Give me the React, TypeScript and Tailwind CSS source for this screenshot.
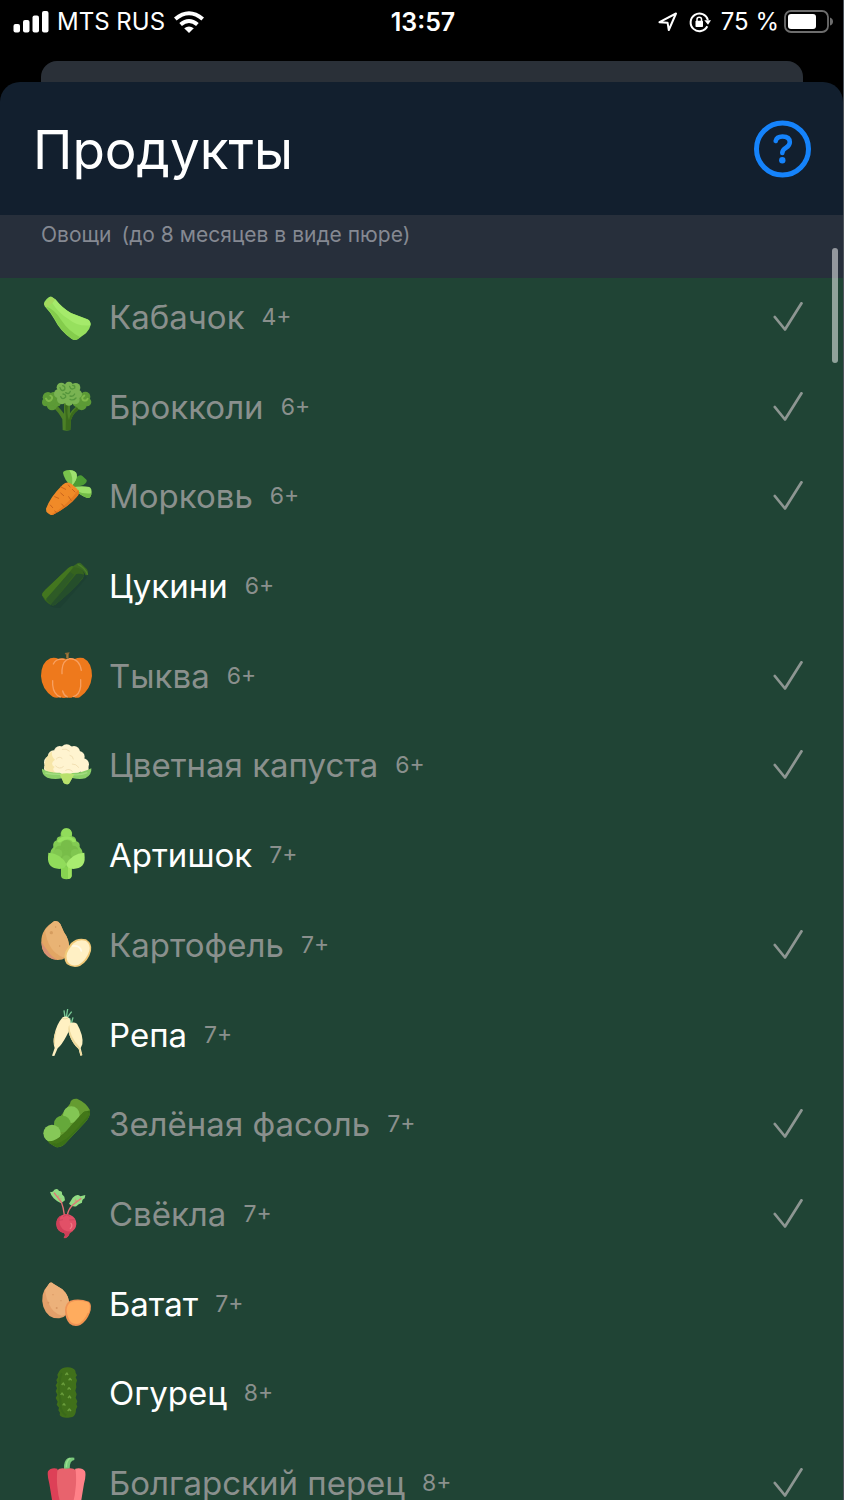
import { useState, type ReactNode } from "react";

type Product = { name: string; age: string; tried: boolean; icon: ReactNode };

function Glyph({ viewBox, children }: { viewBox: string; children: ReactNode }) {
  return (
    <svg viewBox={viewBox} className="size-[52px] shrink-0 overflow-visible" aria-hidden="true">
      {children}
    </svg>
  );
}

const squash = (
  <Glyph viewBox="60 34 156 156">
    <path d="M72 73 Q72 66 80 58 Q90 47 96 52 L106 59 Q126 85 153 100 L203 119 Q213 125 212 136 Q209 150 198 161 L173 179 Q164 184 154 177 Q121 155 103 119 Q92 99 74 80 Z" fill="#97e05e" />
    <path d="M77 80 Q94 99 106 121 Q124 155 156 178 Q164 183 172 179 L181 173 Q145 153 125 123 Q103 88 77 80Z" fill="#84cc4c" />
    <path d="M106 59 Q128 87 154 101 L204 120 Q213 126 211 137 Q174 142 145 118 Q116 100 96 69Z" fill="#a5ea6b" />
    <path d="M72 73 L94 51 L105 59 Q96 76 78 82Z" fill="#a4d95e" />
  </Glyph>
);

const broccoli = (
  <Glyph viewBox="60 303 156 156">
    <path d="M100 383 Q116 396 127 418 L128 450 Q140 454 151 450 L153 420 Q160 397 182 385 L170 378 Q156 390 150 400 V370 H132 V401 Q123 389 112 377Z" fill="#4c8026" />
    <path d="M134 376 Q140 412 137 450 H151 L153 420 Q160 397 182 385 L175 379 Q149 398 147 421 Q139 401 144 376Z" fill="#3b6b1c" />
    <g fill="#5c9a36">
      <circle cx="84" cy="352" r="16" /><circle cx="78" cy="367" r="12" /><circle cx="96" cy="375" r="16" /><circle cx="110" cy="366" r="14" /><circle cx="101" cy="349" r="13" /><circle cx="92" cy="362" r="16" />
      <circle cx="196" cy="350" r="15" /><circle cx="201" cy="366" r="13" /><circle cx="185" cy="376" r="15" /><circle cx="171" cy="368" r="13" /><circle cx="182" cy="352" r="14" /><circle cx="189" cy="363" r="15" />
    </g>
    <g fill="none" stroke="#7fb94a" strokeWidth="6" strokeLinecap="round">
      <path d="M78 356 Q84 368 94 359 Q100 350 91 347" /><path d="M203 356 Q200 365 189 360 Q183 352 193 347" />
    </g>
    <g fill="#79b352">
      <circle cx="124" cy="322" r="14" /><circle cx="147" cy="318" r="13" /><circle cx="167" cy="323" r="14" /><circle cx="173" cy="342" r="13" /><circle cx="165" cy="359" r="14" /><circle cx="147" cy="364" r="13" /><circle cx="126" cy="358" r="15" /><circle cx="115" cy="341" r="13" /><circle cx="145" cy="340" r="26" />
    </g>
    <g fill="none" stroke="#55963c" strokeWidth="4" strokeLinecap="round">
      <path d="M120 323 Q124 336 134 329 Q137 319 128 317" /><path d="M149 319 Q153 332 164 324 Q166 316 158 316" /><path d="M122 350 Q128 361 137 351 Q138 343 129 342" /><path d="M150 348 Q160 351 164 342 M150 358 Q160 363 168 354" /><path d="M137 338 Q147 345 151 334" />
    </g>
  </Glyph>
);

const carrot = (
  <Glyph viewBox="60 32 156 156">
    <path d="M152 79 Q158 62 174 50 Q183 45 188 51 L200 62 Q202 70 190 77 Q180 81 160 84Z" fill="#4c9c34" />
    <path d="M153 80 Q133 62 129 41 Q129 33 148 32 Q165 32 170 44 Q174 59 155 80Z" fill="#79c24c" />
    <path d="M148 33 Q165 32 170 44 Q174 59 155 80 Q161 54 148 33Z" fill="#9fe070" />
    <path d="M157 84 Q184 78 208 83 Q217 87 214 105 Q211 118 202 116 Q180 110 157 84Z" fill="#9bdf68" />
    <path d="M168 94 Q190 105 214 102 Q213 118 203 116 Q185 111 168 94Z" fill="#74bd48" />
    <path d="M78 148 Q91 112 128 76 Q142 64 155 74 L171 88 Q181 98 171 111 Q150 139 98 167 Q91 169 79 157Z" fill="#f08a28" />
    <path d="M94 165 Q141 139 175 91 Q181 101 171 112 Q145 143 98 167Z" fill="#e57b20" />
    <path d="M123 83 L137 90 M131 109 L122 101 M104 112 L116 117 M146 112 L154 124 M157 90 L165 98 M125 134 L133 143 M91 137 L98 145 M104 155 L110 160 M145 77 L150 83" stroke="#c9641c" strokeWidth="3" strokeLinecap="round" />
  </Glyph>
);

const zucchini = (
  <Glyph viewBox="60 301 156 156">
    <path d="M91 439 Q105 447 121 444 L200 354 L190 335Z" fill="#1d4032" />
    <path d="M66 407 Q66 399 76 390 L145 325 Q161 313 180 325 Q199 338 188 357 Q158 392 106 435 Q96 441 84 431 Q71 421 66 407Z" fill="#35631f" />
    <path d="M66 407 Q66 399 76 390 L145 325 Q153 318 164 318 L78 422Z" fill="#43761f" />
    <path d="M78 418 L150 337 L162 345 L93 436Z" fill="#2e5b26" />
    <path d="M92 435 L169 343 Q179 340 193 346 Q172 383 106 435 Q99 439 92 435Z" fill="#254e2b" />
    <path d="M155 323 L169 313 Q178 306 185 313 L201 329 Q207 338 203 346 L197 347 Q190 331 176 326 Q166 321 155 323Z" fill="#3a6923" />
    <path d="M173 314 Q194 323 203 345" fill="none" stroke="#4a7f2a" strokeWidth="4" />
  </Glyph>
);

const pumpkin = (
  <Glyph viewBox="60 30 156 156">
    <path d="M91 55 Q104 51 116 57 Q127 52 139 57 Q152 51 164 57 Q176 51 190 54 Q216 67 216 108 Q212 150 179 172 Q169 176 160 170 Q151 176 142 172 Q130 177 121 171 Q109 176 98 170 Q65 148 63 108 Q64 67 91 55Z" fill="#ee791c" />
    <g fill="none" stroke="#f7a061" strokeWidth="4" strokeLinecap="round">
      <path d="M126 101 V90 Q128 61 149 56 Q178 56 184 91" /><path d="M132 58 Q108 55 100 72" /><path d="M98 122 V135 Q101 164 121 171" /><path d="M182 119 V139 Q179 164 160 170" /><path d="M128 153 Q131 166 142 171" />
    </g>
    <path d="M138 55 V45 L134 39 L149 37 L146 44 V56Z" fill="#8e6a34" />
    <path d="M143 42 V56" stroke="#aa8a4a" strokeWidth="2" />
  </Glyph>
);

const cauliflower = (
  <Glyph viewBox="60 299 156 156">
    <g fill="#fff4d0">
      <circle cx="140" cy="334" r="19" /><circle cx="119" cy="337" r="17" /><circle cx="162" cy="338" r="18" /><circle cx="101" cy="350" r="17" /><circle cx="177" cy="352" r="17" /><circle cx="91" cy="369" r="19" /><circle cx="189" cy="375" r="18" /><circle cx="87" cy="387" r="15" /><circle cx="192" cy="388" r="14" />
      <ellipse cx="140" cy="370" rx="55" ry="41" />
    </g>
    <path d="M96 336 Q74 352 73 382 Q74 400 109 402 Q93 390 104 383 Q88 373 105 361 Q93 352 96 336Z" fill="#f7e6a8" />
    <path d="M109 359 Q117 349 126 357 M127 330 Q139 326 148 335 M150 348 Q159 349 160 359 M107 380 Q118 392 130 382 M157 374 Q168 373 176 384 M137 393 Q147 386 157 396" fill="none" stroke="#f2e0b3" strokeWidth="3" strokeLinecap="round" />
    <path d="M66 388 Q90 402 119 400 L139 411 L157 401 Q187 401 214 387 Q216 407 196 417 Q178 421 157 416 L147 433 Q139 437 131 431 L126 417 Q102 422 82 415 Q64 405 66 388Z" fill="#8bcf68" />
    <path d="M76 401 Q99 406 120 405 M160 406 Q181 408 202 400" fill="none" stroke="#a3dd80" strokeWidth="4" />
    <path d="M119 405 Q140 398 163 405 L147 433 Q139 437 131 431Z" fill="#b9e16c" />
  </Glyph>
);

const artichoke = (
  <Glyph viewBox="60 43 156 156">
    <path d="M123 152 H155 V184 Q153 194 139 194 Q125 194 123 184Z" fill="#87d451" />
    <path d="M144 152 H155 V184 Q153 193 144 193Z" fill="#9de35f" />
    <path d="M122 65 Q120 42 139 41 Q159 42 156 65 Q168 66 169 80 Q181 84 179 97 Q193 111 186 137 L139 157 L92 137 Q86 111 100 98 Q97 82 110 77 Q109 67 122 65Z" fill="#83cb53" />
    <g fill="#78bd49">
      <circle cx="140" cy="94" r="18" /><circle cx="119" cy="108" r="15" /><circle cx="160" cy="108" r="15" /><circle cx="140" cy="126" r="18" />
    </g>
    <g fill="#80c650">
      <circle cx="113" cy="117" r="14" /><circle cx="166" cy="117" r="14" /><circle cx="139" cy="136" r="14" />
    </g>
    <path d="M124 61 Q124 42 139 41 Q155 42 156 61 Q148 68 139 67 Q130 68 124 61Z" fill="#91dc5b" />
    <path d="M111 79 Q124 62 139 66 Q156 63 169 80 Q158 87 155 78 Q140 70 124 81 Q117 87 111 79Z" fill="#97e360" />
    <path d="M85 114 Q123 117 139 148 Q138 161 118 163 Q82 161 84 128Z" fill="#91dc5b" />
    <path d="M193 114 Q155 117 139 148 Q140 161 160 163 Q196 161 194 128Z" fill="#a8ec70" />
  </Glyph>
);

const potato = (
  <Glyph viewBox="60 312 156 156">
    <path d="M102 319 Q114 316 121 327 L132 352 Q149 374 148 405 Q141 436 112 435 Q79 432 67 401 Q56 358 86 331Z" fill="#e2a664" />
    <path d="M102 319 Q114 316 121 327 L132 352 Q149 374 148 405 Q143 424 129 427 Q84 410 75 346 Q88 329 102 319Z" fill="#e9b374" />
    <path d="M67 401 Q74 428 112 435 Q92 423 83 407 Q71 394 64 379Z" fill="#d89172" />
    <circle cx="94" cy="353" r="5" fill="#d69d5f" /><circle cx="119" cy="393" r="2" fill="#cf9558" /><circle cx="107" cy="336" r="2" fill="#cf9558" />
    <path d="M153 384 Q172 366 198 373 Q218 386 213 408 Q205 438 180 453 Q159 461 140 447 Q128 432 137 408Z" fill="#f1c978" />
    <path d="M159 386 Q177 371 198 378 Q213 389 208 408 Q198 437 176 449 Q154 456 143 440 Q135 421 146 404Z" fill="#fff0c4" />
    <path d="M158 393 Q180 391 184 408" fill="none" stroke="#fff9e5" strokeWidth="5" strokeLinecap="round" />
  </Glyph>
);

const turnip = (
  <Glyph viewBox="60 40 156 156">
    <path d="M135 65 L132 44 M139 64 L143 40 M142 65 L155 48 M151 84 L149 67 M154 84 L159 65 M151 83 L145 73" fill="none" stroke="#78c995" strokeWidth="4" />
    <path d="M128 65 Q142 58 151 73 Q155 94 139 122 Q124 150 113 158 L103 181 L96 180 L104 157 Q98 142 103 119 Q109 86 128 65Z" fill="#fff1c2" />
    <path d="M147 84 Q160 77 171 84 Q191 119 187 146 L182 157 L187 178 L181 180 L176 160 Q157 143 148 117 Q142 98 147 84Z" fill="#fff1c2" />
    <path d="M111 100 Q103 124 105 151 Q98 139 103 119 Q107 107 111 100Z M148 88 Q148 123 178 153 L187 179 L182 180 L176 160 Q157 143 148 117 Q142 98 148 88Z" fill="#eed99c" />
    <path d="M127 68 Q135 72 144 67" fill="none" stroke="#e4db9b" strokeWidth="3" />
  </Glyph>
);

const beans = (
  <Glyph viewBox="60 310 156 156">
    <path d="M150 327 Q152 311 171 312 Q199 324 210 347 Q212 365 197 381 L142 440 Q125 461 108 457 Q87 448 74 427Z" fill="#659c31" />
    <path d="M210 347 Q212 365 197 381 L142 440 Q125 461 108 457 Q90 449 82 439 Q113 438 145 404 L190 353Z" fill="#3b7117" />
    <path d="M105 442 Q136 434 160 404 L205 354" fill="none" stroke="#437819" strokeWidth="12" />
    <circle cx="154" cy="360" r="25" fill="#83c654" /><circle cx="127" cy="388" r="25" fill="#65a83a" /><circle cx="96" cy="416" r="26" fill="#86c858" />
    <path d="M84 439 Q104 443 133 415 L181 362 L194 350 L203 350 L150 411 Q120 448 90 448Z" fill="#437819" />
  </Glyph>
);

const beet = (
  <Glyph viewBox="60 38 156 156">
    <path d="M90 49 Q98 53 103 43 Q114 38 117 47 Q128 46 126 57 L133 64 L135 75 L123 84 Q111 79 101 69 Q93 61 90 49Z" fill="#92dc84" />
    <path d="M147 85 L158 67 Q171 54 181 63 L196 59 L194 69 Q186 72 186 82 Q175 86 169 93 Q157 96 147 85Z" fill="#92dc84" />
    <path d="M102 52 L124 80 Q131 98 133 119 M184 69 L159 88 Q145 101 142 119" fill="none" stroke="#e47075" strokeWidth="4" />
    <path d="M116 59 V70 M125 70 L114 72 M167 70 L165 83 M178 76 H165" fill="none" stroke="#d79373" strokeWidth="2" />
    <path d="M127 119 Q139 113 151 119 Q170 128 169 147 Q168 165 149 173 Q147 185 135 189 L131 186 Q137 181 133 174 Q110 168 109 146 Q109 127 127 119Z" fill="#e25067" />
    <path d="M125 120 Q108 127 109 148 Q110 168 133 174 Q138 183 131 187 L135 189 Q147 183 149 173 L159 168 Q132 172 122 153 Q113 134 125 120Z" fill="#cf3f58" />
    <path d="M129 124 L140 118 L151 124 M117 135 L129 133 M148 134 L164 133" fill="none" stroke="#c23f57" strokeWidth="2" />
    <path d="M153 144 Q159 151 151 160" fill="none" stroke="#f07a86" strokeWidth="4" strokeLinecap="round" />
  </Glyph>
);

const sweetPotato = (
  <Glyph viewBox="60 308 156 156">
    <path d="M85 328 Q91 316 100 325 L127 342 Q151 363 147 395 Q144 426 118 429 Q83 431 70 394 Q59 355 85 328Z" fill="#e3a06a" />
    <path d="M85 328 Q91 316 100 325 L127 342 Q151 363 147 395 Q144 419 125 421 Q98 413 87 386 Q79 371 75 344Z" fill="#ecb17a" />
    <circle cx="99" cy="358" r="2" fill="#d79661" /><circle cx="123" cy="376" r="2" fill="#d79661" /><circle cx="110" cy="398" r="3" fill="#d79661" /><circle cx="85" cy="382" r="3" fill="#d79661" />
    <path d="M151 376 Q176 367 207 379 Q218 389 209 414 Q199 439 181 449 Q163 456 149 445 Q135 431 135 403 Q137 382 151 376Z" fill="#ef9355" />
    <path d="M154 380 Q175 372 204 381 Q214 391 206 412 Q195 434 180 444 Q165 449 153 441 Q140 423 140 403 Q141 386 154 380Z" fill="#ffac5e" />
    <path d="M182 443 Q196 434 205 413" fill="none" stroke="#f5964a" strokeWidth="4" />
  </Glyph>
);

const cucumber = (
  <Glyph viewBox="60 36 156 156">
    <path d="M118 48 Q124 38 143 37 Q161 38 166 47 L167 54 L171 61 L167 67 L171 76 L168 86 L169 97 L166 107 L170 118 L167 128 L172 139 L169 147 L172 155 L168 163 Q168 182 157 186 L145 188 Q126 190 119 180 L120 173 L115 166 L117 158 L110 149 L113 140 L107 129 L112 119 L107 109 L111 100 L107 91 L112 83 L109 75 L114 67 L112 59Z" fill="#40701a" />
    <path d="M125 54 Q116 78 117 113 Q123 134 122 158 Q127 176 139 181" fill="none" stroke="#3a6a1a" strokeWidth="6" />
    <path d="M136 60 L141 54 L144 60 M146 76 L150 70 L155 76 M125 90 L130 84 L134 91 M143 104 L147 98 L152 104 M122 120 L126 114 L131 121 M144 129 L149 123 L153 130 M128 151 L132 146 L136 152 M143 168 L148 162 L153 168" fill="none" stroke="#6a9d3c" strokeWidth="4" strokeLinejoin="round" />
  </Glyph>
);

const pepper = (
  <Glyph viewBox="60 305 156 156">
    <path d="M132 341 Q130 317 144 308 Q155 305 163 307 V314 Q149 315 149 340Z" fill="#79c87b" />
    <path d="M139 336 Q138 317 151 308" fill="none" stroke="#9ae08f" strokeWidth="4" />
    <path d="M112 340 Q92 336 84 348 Q81 359 88 385 L97 440 Q106 459 123 459 L139 451Z" fill="#dd4057" />
    <path d="M166 340 Q187 336 195 348 Q199 359 192 385 L183 440 Q174 459 157 459 L139 451Z" fill="#ff8188" />
    <path d="M112 345 Q119 336 139 340 Q160 336 167 345 Q172 395 158 448 Q140 466 122 448 Q107 395 112 345Z" fill="#e8636d" />
  </Glyph>
);

const initialProducts: Product[] = [
  { name: "Кабачок", age: "4+", tried: true, icon: squash },
  { name: "Брокколи", age: "6+", tried: true, icon: broccoli },
  { name: "Морковь", age: "6+", tried: true, icon: carrot },
  { name: "Цукини", age: "6+", tried: false, icon: zucchini },
  { name: "Тыква", age: "6+", tried: true, icon: pumpkin },
  { name: "Цветная капуста", age: "6+", tried: true, icon: cauliflower },
  { name: "Артишок", age: "7+", tried: false, icon: artichoke },
  { name: "Картофель", age: "7+", tried: true, icon: potato },
  { name: "Репа", age: "7+", tried: false, icon: turnip },
  { name: "Зелёная фасоль", age: "7+", tried: true, icon: beans },
  { name: "Свёкла", age: "7+", tried: true, icon: beet },
  { name: "Батат", age: "7+", tried: false, icon: sweetPotato },
  { name: "Огурец", age: "8+", tried: false, icon: cucumber },
  { name: "Болгарский перец", age: "8+", tried: true, icon: pepper },
];

function StatusBar() {
  return (
    <div className="grid h-11 shrink-0 grid-cols-[1fr_auto_1fr] items-center pr-[10px] pl-[13px] text-2xl text-white">
      <div className="flex items-center gap-2">
        <svg viewBox="0 0 36 22" className="h-[22px] w-9" fill="currentColor" aria-hidden="true">
          <rect x="0.5" y="13" width="6.5" height="8.5" rx="2" />
          <rect x="10" y="9" width="6.5" height="12.5" rx="2" />
          <rect x="19.5" y="4.500" width="6.5" height="17" rx="2" />
          <rect x="29" y="0" width="6.5" height="21.500" rx="2" />
        </svg>
        <span>MTS RUS</span>
        <svg viewBox="0 0 32 23" className="h-[23px] w-8" fill="none" stroke="currentColor" strokeWidth="4" aria-hidden="true">
          <path d="M2.300 8 Q16 -3.600 29.700 8" />
          <path d="M7.600 13.600 Q16 6.400 24.400 13.600" />
          <path d="M11.200 17.300 Q16 13.800 20.800 17.300 L16 22Z" fill="currentColor" stroke="none" />
        </svg>
      </div>
      <time className="text-[25px] leading-[32px] font-semibold">13:57</time>
      <div className="flex items-center justify-end">
        <svg viewBox="0 0 20 20" className="mr-[11px] size-5" fill="none" stroke="currentColor" strokeWidth="2" strokeLinejoin="round" aria-hidden="true">
          <path d="M1.500 10.200 L18 1.500 L10.800 18 L9.600 10.800Z" />
        </svg>
        <svg viewBox="0 0 22 22" className="mr-[10px] size-[22px]" fill="none" stroke="currentColor" strokeWidth="2" aria-hidden="true">
          <path d="M18.300 15.300 A8.800 8.800 0 1 1 18.900 9" />
          <path d="M15.300 9.300 H22 L19 13.800Z" fill="currentColor" stroke="none" />
          <rect x="6.500" y="9.800" width="7.500" height="6.200" rx="0.800" fill="currentColor" stroke="none" />
          <path d="M8 10.500 V8.300 Q8 6.200 10.250 6.200 Q12.500 6.200 12.500 8.300 V10.500" strokeWidth="1.500" />
        </svg>
        <span className="mr-[5px]">75 %</span>
        <svg viewBox="0 0 49 24" className="h-6 w-[49px]" aria-hidden="true">
          <rect x="1" y="1" width="43" height="21" rx="6" fill="none" stroke="#6d6d6d" strokeWidth="1.800" />
          <rect x="4" y="4" width="28" height="15" rx="3" fill="white" />
          <path d="M46 7.500 Q49 8.500 49 11.500 Q49 14.500 46 15.500Z" fill="#6d6d6d" />
        </svg>
      </div>
    </div>
  );
}

function CheckMark() {
  return (
    <svg viewBox="0 0 30 30" className="ml-auto size-[30px] shrink-0" fill="none" stroke="#8d9692" strokeWidth="2.700" strokeLinecap="round" strokeLinejoin="round" aria-hidden="true">
      <path d="M1.800 15 L12 27.500 L28.500 1.300" />
    </svg>
  );
}

export default function App() {
  const [products, setProducts] = useState(initialProducts);

  const toggle = (name: string) =>
    setProducts((list) => list.map((p) => (p.name === name ? { ...p, tried: !p.tried } : p)));

  return (
    <div className="flex h-screen flex-col overflow-hidden border-r border-[#4d535b] bg-black font-['Inter',sans-serif]">
      <StatusBar />
      <div className="mr-10 ml-[41px] mt-[17px] h-[21px] shrink-0 rounded-t-2xl bg-[#2a3038]" />
      <main className="relative flex min-h-0 flex-1 flex-col overflow-hidden rounded-t-[20px] bg-[#121f2e]">
        <header className="flex h-[133px] shrink-0 items-center justify-between pr-8 pl-[33px]">
          <h1 className="pt-[2px] text-[53px] leading-[64px] text-white">Продукты</h1>
          <button type="button" aria-label="Справка" className="size-[58px]">
            <svg viewBox="0 0 58 58" className="size-[58px]" fill="none" stroke="#1583fb" aria-hidden="true">
              <circle cx="29.500" cy="29" r="26" strokeWidth="5" />
              <path d="M22.700 21 Q23.700 16.500 29.500 16.500 Q36.800 16.500 36.800 22.300 Q36.800 25.500 33 27.800 Q29.300 30.100 29.300 33" strokeWidth="4.600" strokeLinecap="round" />
              <circle cx="29.300" cy="40.300" r="3.200" fill="#1583fb" stroke="none" />
            </svg>
          </button>
        </header>
        <div className="min-h-0 flex-1 overflow-y-auto bg-[#204435] [scrollbar-width:none]">
          <h2 className="flex h-[63px] gap-[10px] bg-[#272f3b] px-[41px] pt-[6px] text-[21px] leading-[28px] text-[#858992]">
            <span>Овощи</span>
            <span>(до 8 месяцев в виде пюре)</span>
          </h2>
          <ul className="flex min-h-[1233px] flex-col justify-between pt-[11px]">
            {products.map((p) => (
              <li key={p.name}>
                <button
                  type="button"
                  aria-pressed={p.tried}
                  onClick={() => toggle(p.name)}
                  className="flex h-14 w-full items-center pr-10 pl-10 text-left text-[#8a908d]"
                >
                  {p.icon}
                  <span className={p.tried ? "ml-[17px] text-[33px] leading-[44px]" : "ml-[17px] text-[33px] leading-[44px] text-white"}>
                    {p.name}
                  </span>
                  <span className="ml-[17px] text-[23px] leading-[28px]">{p.age}</span>
                  {p.tried && <CheckMark />}
                </button>
              </li>
            ))}
          </ul>
        </div>
        <div className="absolute top-[166px] right-[5px] h-[115px] w-[6px] rounded-full bg-white/50" />
      </main>
    </div>
  );
}
